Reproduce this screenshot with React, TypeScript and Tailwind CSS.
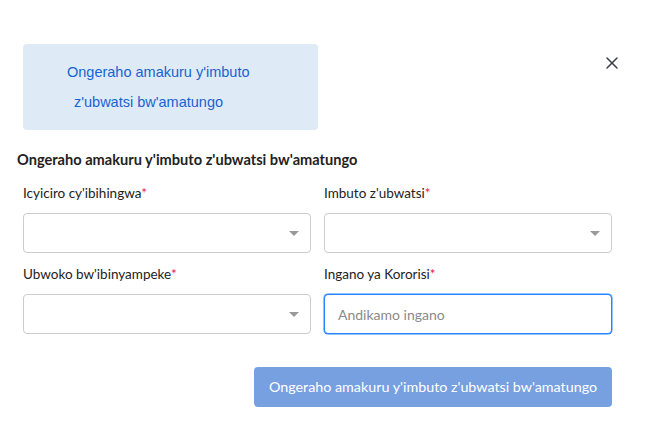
import { X } from "lucide-react";

const font = { fontFamily: "Lato, 'Open Sans', sans-serif" };
const arial = { fontFamily: "'Liberation Sans', Arial, sans-serif" };

function Label({ text }: { text: string }) {
  return (
    <div className="h-[20px] text-[13.5px] leading-[20px] text-[#222]">
      {text}
      <span className="text-[#e8174a]">*</span>
    </div>
  );
}

function SelectBox() {
  return (
    <div className="relative h-[40px] rounded-[4px] border border-[#cccccc] bg-white">
      <span className="absolute right-[11px] top-[17px] h-0 w-0 border-x-[5px] border-t-[5px] border-x-transparent border-t-[#999]" />
    </div>
  );
}

export default function App() {
  return (
    <div className="h-[425px] w-[662px] bg-white" style={font}>
      <div className="flex items-start justify-between pl-[23px] pr-[40px] pt-[44px]">
        <div
          className="flex h-[86px] w-[295px] flex-col justify-center gap-[13px] rounded-[4px] bg-[#dfeaf7] text-[14.5px] leading-[17px] text-[#1763d1]"
          style={arial}
        >
          <div className="pl-[44px]">Ongeraho amakuru y'imbuto</div>
          <div className="pl-[51px]">z'ubwatsi bw'amatungo</div>
        </div>
        <X className="mt-[9px]" size={20} strokeWidth={1.8} color="#3a3f47" />
      </div>

      <div className="pl-[17px] pt-[21px] text-[14.6px] font-bold leading-[18px] text-[#222]">
        Ongeraho amakuru y'imbuto z'ubwatsi bw'amatungo
      </div>

      <div className="ml-[23px] mt-[14px] grid w-[589px] grid-cols-2 gap-x-[13px] gap-y-[11px]">
        <div className="flex flex-col gap-[10px]">
          <Label text="Icyiciro cy'ibihingwa" />
          <SelectBox />
        </div>
        <div className="flex flex-col gap-[10px]">
          <Label text="Imbuto z'ubwatsi" />
          <SelectBox />
        </div>
        <div className="flex flex-col gap-[10px]">
          <Label text="Ubwoko bw'ibinyampeke" />
          <SelectBox />
        </div>
        <div className="flex flex-col gap-[10px]">
          <Label text="Ingano ya Kororisi" />
          <div className="flex h-[40px] items-center rounded-[4px] border border-[#2684ff] bg-white px-[13px] text-[14px] text-[#8a8a8a] shadow-[0_0_0_0.5px_#2684ff]">
            Andikamo ingano
          </div>
        </div>
      </div>

      <div className="flex justify-end pr-[50px] pt-[33px]">
        <button className="h-[40px] w-[358px] rounded-[4px] bg-[#77a0e1] text-[14.3px] text-white">
          Ongeraho amakuru y'imbuto z'ubwatsi bw'amatungo
        </button>
      </div>
    </div>
  );
}
